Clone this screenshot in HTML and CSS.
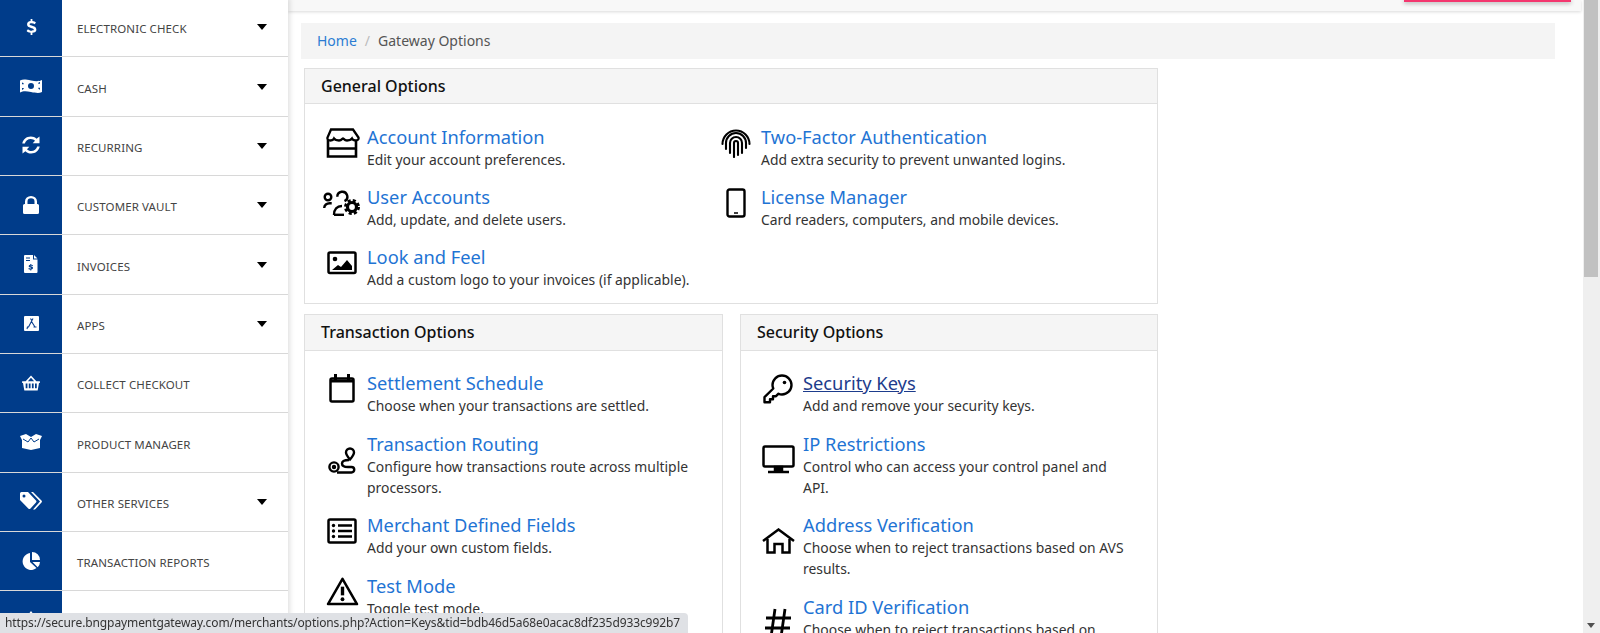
FILE: index.html
```html
<!DOCTYPE html>
<html lang="en">
<head>
<meta charset="utf-8">
<title>Gateway Options</title>
<link rel="stylesheet" href="styles.css">
</head>
<body>
<div class="app">
  <nav class="sidebar">
    <a class="nav-item"><span class="nav-icon"><svg width="11" height="16" viewBox="0 0 12 18"><path d="M5 0h2v2.200c1.800.2 3.400 1 4 1.600L9.600 6C8.700 5.300 7.500 4.800 6 4.800c-1.300 0-2.200.4-2.200 1.200 0 2 7.700 1 7.700 6 0 2-1.800 3.300-4.500 3.600V18H5v-2.400c-2-.2-3.600-1-4.500-2L2 11.400c1 .9 2.500 1.700 4 1.700 1.500 0 2.600-.4 2.600-1.300C8.600 9.600 1 10.700 1 5.800c0-1.900 1.600-3.200 4-3.500z"/></svg></span><span class="nav-label">ELECTRONIC CHECK</span><i class="caret"></i></a>
    <a class="nav-item"><span class="nav-icon"><svg width="22" height="16" viewBox="0 0 22 16"><path fill-rule="evenodd" d="M0 2.500C3 1 6 1.500 11 2.500s8 1 11-.5v12c-3 1.500-6 1-11 0s-8-1-11 .5zM11 5a3 3 0 1 0 0 6 3 3 0 0 0 0-6zM2 4.500v1.800h1.800C3.800 5.300 3 4.500 2 4.500zM20 4v1.800h-1.800C18.200 4.800 19 4 20 4zM2 10v1.800c1 0 1.800-.8 1.800-1.800zM20 9.700v1.800c-1 0-1.800-.8-1.800-1.800z"/></svg></span><span class="nav-label">CASH</span><i class="caret"></i></a>
    <a class="nav-item"><span class="nav-icon"><svg width="18" height="18" viewBox="0 0 18 18"><path d="M2.800 7.500H.3C1 3.300 4.500.5 8.800.5c2.300 0 4.300.9 5.800 2.300L17.500.5v6.800h-6.800l2.300-2.500c-1-1-2.600-1.800-4.200-1.800-2.900 0-5.300 1.800-6 4.500zM.5 10.700h6.800l-2.300 2.500c1 1 2.600 1.800 4.200 1.800 2.900 0 5.300-1.800 6-4.500h2.500c-.7 4.200-4.200 7-8.500 7-2.300 0-4.300-.9-5.800-2.300L.5 17.500z"/></svg></span><span class="nav-label">RECURRING</span><i class="caret"></i></a>
    <a class="nav-item"><span class="nav-icon"><svg width="16" height="18" viewBox="0 0 16 18"><path d="M2 8V5.500a6 5.500 0 0 1 12 0V8h.5A1.500 1.500 0 0 1 16 9.500v7a1.500 1.500 0 0 1-1.500 1.500h-13A1.500 1.500 0 0 1 0 16.500v-7A1.500 1.500 0 0 1 1.500 8zm2.500 0h7V5.500a3.500 3.200 0 0 0-7 0z"/></svg></span><span class="nav-label">CUSTOMER VAULT</span><i class="caret"></i></a>
    <a class="nav-item"><span class="nav-icon"><svg width="14" height="18" viewBox="0 0 14 18"><path fill-rule="evenodd" d="M1 0h8v4.500h4.500V17a1 1 0 0 1-1 1H1a1 1 0 0 1-1-1V1a1 1 0 0 1 1-1zm9 0 3.500 3.500H10zM2 2.500v1h4v-1zm0 2.500v1h4V5zm4.300 4v.8c-1 .1-1.600.7-1.600 1.400 0 1.600 2.700 1.100 2.700 1.900 0 .4-1.800.4-2.600-.2l-.4 1c.4.300 1 .5 1.900.6v.9h1v-.9c1-.1 1.700-.7 1.700-1.500 0-1.700-2.700-1.200-2.700-1.900 0-.5 1.500-.4 2.300.1l.4-1c-.4-.2-.9-.4-1.700-.4V9z"/></svg></span><span class="nav-label">INVOICES</span><i class="caret"></i></a>
    <a class="nav-item"><span class="nav-icon"><svg width="15" height="15" viewBox="0 0 15 15"><rect width="15" height="15" rx="1"/><path d="M6.500 2.500 8 5M9 2.500 4.500 11M7.500 5.500 11 11M3 11h2M9.500 11h3M3.500 11 3 13" fill="none" stroke="#0b3f8f" stroke-width="1.100"/></svg></span><span class="nav-label">APPS</span><i class="caret"></i></a>
    <a class="nav-item"><span class="nav-icon"><svg width="20" height="16" viewBox="0 0 20 18"><path fill-rule="evenodd" d="M10 .5 16 7h4v2h-1l-1.500 8.500h-15L1 9H0V7h4zM6.500 7h7L10 3zM4 9.500V15h2V9.500zm3.500 0V15h2V9.500zm3.500 0V15h2V9.500zm3.500 0V15h2V9.500z"/></svg></span><span class="nav-label">COLLECT CHECKOUT</span></a>
    <a class="nav-item"><span class="nav-icon"><svg width="22" height="16" viewBox="0 0 22 16"><path d="M0 2 6 0l5 3 5-3 6 2-2 4v8l-9 2-9-2V6z"/><path d="M3 5l5 3 3-4 3 4 5-3" fill="none" stroke="#003c8a"/></svg></span><span class="nav-label">PRODUCT MANAGER</span></a>
    <a class="nav-item"><span class="nav-icon"><svg width="22" height="18" viewBox="0 0 22 18"><path fill-rule="evenodd" d="M1.500 0H8l8 8.500a1.500 1.500 0 0 1 0 2L10.500 16.500a1.500 1.500 0 0 1-2.200 0L0 8V1.500A1.500 1.500 0 0 1 1.500 0zM4 2.500a1.500 1.500 0 1 0 0 3 1.500 1.500 0 0 0 0-3zM11 0h2l8.500 8.500a1.500 1.500 0 0 1 0 2L15 17.500h-2l7-8z"/></svg></span><span class="nav-label">OTHER SERVICES</span><i class="caret"></i></a>
    <a class="nav-item"><span class="nav-icon"><svg width="18" height="18" viewBox="0 0 18 18"><path d="M8 1v9l6.500 6A8.500 8.500 0 1 1 8 1zM10 0a8 8 0 0 1 8 8h-8zM10.500 10H18a8 8 0 0 1-2.300 5.300z"/></svg></span><span class="nav-label">TRANSACTION REPORTS</span></a>
    <a class="nav-item"><span class="nav-icon"><svg width="18" height="18" viewBox="0 0 18 18"><path d="M9 0l6 8v10H3V8z"/></svg></span><span class="nav-label"></span></a>
  </nav>
  <div class="main">
    <div class="topbar"><div class="top-button"></div></div>
    <ol class="breadcrumb"><li><a>Home</a></li><li class="sep">/</li><li class="current">Gateway Options</li></ol>
    <div class="cards">
      <section class="card card-wide">
        <h2 class="card-head">General Options</h2>
        <div class="card-body two-col">
          <div class="opt"><span class="opt-icon"><svg width="36" height="30" viewBox="0 0 36 30" fill="none" stroke="#000" stroke-width="2.600"><path d="M7 1.500h22l5.500 8c.5 2-1 3-3 3-2.500 0-3.500-2-3.500-2s-1.500 2-5 2c-2.500 0-3.500-2-4-2s-1.500 2-4 2c-3.500 0-5-2-5-2s-1 2-3.500 2c-2 0-3.500-1-3-3z" stroke-width="2.300"/><path d="M4 12v16.500h28V12M4 20.500h28"/></svg></span><div class="opt-text"><a class="opt-title">Account Information</a><p>Edit your account preferences.</p></div></div>
          <div class="opt"><span class="opt-icon"><svg width="30" height="30" viewBox="0 0 30 30" fill="none" stroke="#000" stroke-width="2.100" stroke-linecap="round"><path d="M1.500 16a13.500 13.500 0 0 1 27 0"/><path d="M5 21v-6a10 10 0 0 1 20 0v5"/><path d="M9 25V15a6 6 0 0 1 12 0v10"/><path d="M13 29V15a2 2 0 0 1 4 0v12"/></svg></span><div class="opt-text"><a class="opt-title">Two-Factor Authentication</a><p>Add extra security to prevent unwanted logins.</p></div></div>
          <div class="opt"><span class="opt-icon"><svg width="38" height="26" viewBox="0 0 38 26" fill="none" stroke="#000" stroke-width="2.400"><circle cx="5" cy="7" r="3.300"/><path d="M1.200 18c0-3 2.500-4.800 5.500-4.800h2"/><path d="M14.300 6.700A5 5 0 1 1 21.500 11.200"/><path d="M11 25c0-6 3-9 8-9"/><path d="M11 24.800h10"/><circle cx="29" cy="17" r="6.500" stroke-width="3" stroke-dasharray="3 2.100"/><circle cx="29" cy="17" r="4.500" stroke-width="3.200"/></svg></span><div class="opt-text"><a class="opt-title">User Accounts</a><p>Add, update, and delete users.</p></div></div>
          <div class="opt"><span class="opt-icon"><svg width="20" height="30" viewBox="0 0 20 30" fill="none" stroke="#000" stroke-width="2.400"><rect x="1.500" y="1.500" width="17" height="27" rx="2"/><path d="M8 25h4" stroke-width="1.500"/></svg></span><div class="opt-text"><a class="opt-title">License Manager</a><p>Card readers, computers, and mobile devices.</p></div></div>
          <div class="opt"><span class="opt-icon"><svg width="30" height="24" viewBox="0 0 30 24" fill="none" stroke="#000" stroke-width="2.500"><rect x="1.500" y="1.500" width="27" height="20.500" rx="1.500"/><circle cx="8" cy="8" r="2.300" fill="#000" stroke="none"/><path d="M5 19l6-5 3 2 6-7 5 6v4z" fill="#000" stroke="none"/></svg></span><div class="opt-text"><a class="opt-title">Look and Feel</a><p>Add a custom logo to your invoices (if applicable).</p></div></div>
        </div>
      </section>
      <section class="card">
        <h2 class="card-head">Transaction Options</h2>
        <div class="card-body">
          <div class="opt"><span class="opt-icon"><svg width="26" height="30" viewBox="0 0 26 30" fill="none" stroke="#000" stroke-width="2.500"><rect x="1.500" y="4.500" width="23" height="23" rx="1.500"/><path d="M1.500 7h23M6.500 0v6M19.500 0v6" stroke-width="3"/></svg></span><div class="opt-text"><a class="opt-title">Settlement Schedule</a><p>Choose when your transactions are settled.</p></div></div>
          <div class="opt"><span class="opt-icon"><svg width="30" height="32" viewBox="0 0 30 32" fill="none" stroke="#000" stroke-width="2.400"><path d="M23 15.500c-2.500-3-4-5-4-7a4 4 0 0 1 8 0c0 2-1.500 4-4 7z"/><circle cx="7" cy="23" r="4.600"/><circle cx="7" cy="23" r="1" fill="#000"/><path d="M22 16c-5 0-7 1-7 3.500s2.500 3.500 6 3.500h3.500a2.700 2.700 0 0 1 0 5.500H10"/></svg></span><div class="opt-text"><a class="opt-title">Transaction Routing</a><p>Configure how transactions route across multiple processors.</p></div></div>
          <div class="opt"><span class="opt-icon"><svg width="30" height="26" viewBox="0 0 30 26" fill="none" stroke="#000" stroke-width="2.500"><rect x="1.500" y="1.500" width="27" height="23" rx="1.500"/><path d="M11 7.500h14M11 13h14M11 18.500h14"/><g fill="#000" stroke="none"><circle cx="6.500" cy="7.500" r="1.700"/><circle cx="6.500" cy="13" r="1.700"/><circle cx="6.500" cy="18.500" r="1.700"/></g></svg></span><div class="opt-text"><a class="opt-title">Merchant Defined Fields</a><p>Add your own custom fields.</p></div></div>
          <div class="opt"><span class="opt-icon"><svg width="33" height="29" viewBox="0 0 34 30" fill="none" stroke="#000" stroke-width="2.600"><path d="M17 2 32 28H2z" stroke-linejoin="round"/><path d="M17 10v9" stroke-width="3.500"/><circle cx="17" cy="23" r="2" fill="#000" stroke="none"/></svg></span><div class="opt-text"><a class="opt-title">Test Mode</a><p>Toggle test mode.</p></div></div>
        </div>
      </section>
      <section class="card">
        <h2 class="card-head">Security Options</h2>
        <div class="card-body">
          <div class="opt"><span class="opt-icon"><svg width="30" height="30" viewBox="0 0 30 30" fill="none" stroke="#000" stroke-width="2.400"><path d="M19 1.500a9.500 9.500 0 0 1 0 19c-1.500 0-2.500-.3-3.500-.8L13 22.200h-3v3H7v3H1.500v-5L10.300 14.500c-.5-1-.8-2.300-.8-3.500A9.500 9.500 0 0 1 19 1.500z" stroke-linejoin="round"/><circle cx="21.500" cy="8.500" r="1.800" fill="#000" stroke="none"/></svg></span><div class="opt-text"><a class="opt-title active">Security Keys</a><p>Add and remove your security keys.</p></div></div>
          <div class="opt"><span class="opt-icon"><svg width="33" height="29" viewBox="0 0 33 29" fill="none" stroke="#000" stroke-width="2.500"><rect x="1.500" y="1.500" width="30" height="20" rx="1.500"/><path d="M13 22h7v3h-7z" fill="#000"/><path d="M6 27h21"/></svg></span><div class="opt-text"><a class="opt-title">IP Restrictions</a><p>Control who can access your control panel and API.</p></div></div>
          <div class="opt"><span class="opt-icon"><svg width="33" height="26" viewBox="0 0 33 26" fill="none" stroke="#000" stroke-width="2.500"><path d="M1 13 16.500 1.500 32 13"/><path d="M5.500 11v13.500h7V16h8v8.500h7V11"/></svg></span><div class="opt-text"><a class="opt-title">Address Verification</a><p>Choose when to reject transactions based on AVS results.</p></div></div>
          <div class="opt"><span class="opt-icon"><svg width="26" height="30" viewBox="0 0 26 30" fill="none" stroke="#000" stroke-width="2.800"><path d="M10 1 6 29M20 1l-4 28M1 10h25M0 20h25"/></svg></span><div class="opt-text"><a class="opt-title">Card ID Verification</a><p>Choose when to reject transactions based on CVV results.</p></div></div>
        </div>
      </section>
    </div>
  </div>
  <div class="scrollbar"><div class="thumb"></div><i class="scroll-down"></i></div>
</div>
<div class="status">https://secure.bngpaymentgateway.com/merchants/options.php?Action=Keys&amp;tid=bdb46d5a68e0acac8df235d933c992b7</div>
</body>
</html>
```

FILE: styles.css
```css
* { box-sizing: border-box; }
html, body { margin: 0; height: 100%; overflow: hidden; background: #fff; }
body { font-family: "Noto Sans", "Open Sans", sans-serif; color: #333; }
.app { display: flex; height: 633px; overflow: hidden; }
.sidebar { width: 288px; flex: none; margin-top: -2px; box-shadow: 2px 0 5px rgba(0,0,0,.12); z-index: 2; overflow: hidden; background: #fff; }
.nav-item { display: flex; align-items: center; height: 59.35px; border-bottom: 1px solid #d8d8d8; }
.nav-icon { width: 62px; height: 100%; flex: none; background: #003c8a; display: flex; align-items: center; justify-content: center; padding-bottom: 1px; }
.nav-icon svg { fill: #fff; }
.nav-label { flex: 1; padding: 3px 0 0 15px; font-size: 11.500px; letter-spacing: .1px; color: #444; }
.caret { width: 0; height: 0; border: 5px solid transparent; border-top: 6px solid #000; border-bottom: 0; margin: 0 21px 0 0; }
.main { flex: 1; min-width: 0; }
.topbar { height: 11px; margin-right: 2px; background: #f8f8f8; box-shadow: 0 1px 3px rgba(0,0,0,.15); display: flex; justify-content: flex-end; padding-right: 10px; }
.top-button { width: 167px; height: 2px; background: #f4376f; box-shadow: 0 1px 4px rgba(0,0,0,.45); }
.breadcrumb { list-style: none; display: flex; align-items: center; gap: 8px; margin: 12px 0 0 13px; padding: 0 16px 1px; width: 1254px; height: 36px; background: #f4f4f4; font-size: 14px; }
.breadcrumb a { color: #2b7cd3; }
.breadcrumb .sep { color: #bbb; }
.breadcrumb .current { color: #555; }
.cards { display: grid; grid-template-columns: 419px 418px; column-gap: 17px; row-gap: 10px; width: 854px; margin: 9px 0 0 16px; }
.card { border: 1px solid #e0e0e0; background: #fff; min-width: 0; }
.card-wide { grid-column: 1 / 3; }
.card-head { margin: 0; height: 36px; padding: 0 16px 1px; display: flex; align-items: center; background: #f5f5f5; border-bottom: 1px solid #e0e0e0; font-size: 16px; font-weight: 500; color: #111; }
.card-wide .card-head { height: 35px; }
.card-body { display: flex; flex-direction: column; gap: 15.500px; padding: 20px 16px 12px; }
.two-col { display: grid; grid-template-columns: 394px 1fr; row-gap: 15.100px; column-gap: 0; padding-top: 21px; padding-bottom: 13px; }
.opt { display: flex; }
.opt-icon { width: 46px; flex: none; display: flex; align-items: center; justify-content: center; padding: 0 4px 10px 0; }
.opt-text { min-width: 0; padding-right: 16.500px; }
.opt-title { display: block; color: #1f74d4; font-size: 18.300px; line-height: 24px; }
.opt-title.active { color: #1d3c8c; text-decoration: underline; }
.opt-text p { margin: 0; font-size: 13.900px; line-height: 21px; color: #333; }
.scrollbar { width: 17px; flex: none; background: #efefef; padding: 0 2px 0 1px; position: relative; }
.thumb { height: 277px; background: #c1c1c1; }
.scroll-down { position: absolute; left: 4px; bottom: 5px; width: 0; height: 0; border: 4px solid transparent; border-top: 5px solid #505050; border-bottom: 0; }
.status { position: fixed; left: 0; bottom: 0; z-index: 5; width: 688px; height: 20px; padding: 0 5px; background: #dfe1e5; border-top-right-radius: 4px; font-size: 12px; letter-spacing: -.1px; line-height: 20px; color: #333; white-space: nowrap; overflow: hidden; }
```
